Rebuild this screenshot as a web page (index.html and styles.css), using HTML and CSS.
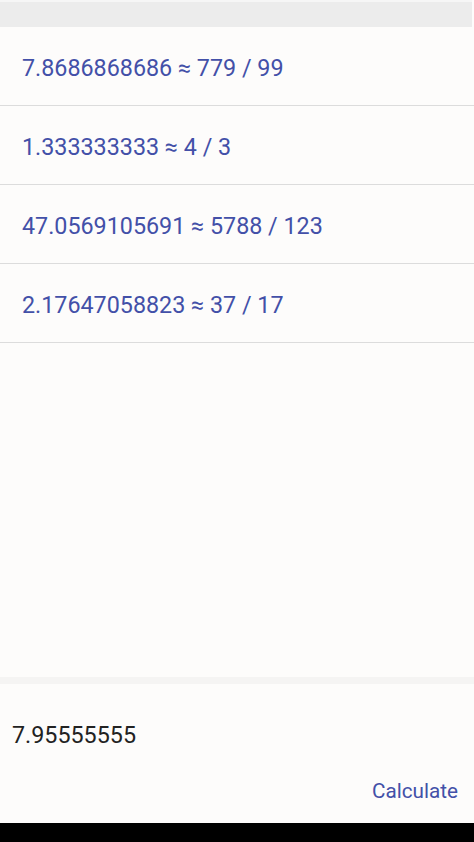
FILE: index.html
```html
<!DOCTYPE html>
<html>
<head>
<meta charset="utf-8">
<link rel="stylesheet" href="styles.css">
</head>
<body>
<div class="app">
  <div class="topbar"></div>
  <ul class="results">
    <li class="row">7.8686868686 ≈ 779 / 99</li>
    <li class="row">1.333333333 ≈ 4 / 3</li>
    <li class="row">47.0569105691 ≈ 5788 / 123</li>
    <li class="row">2.17647058823 ≈ 37 / 17</li>
  </ul>
  <div class="spacer"></div>
  <div class="panel">
    <div class="input">7.95555555</div>
    <div class="actions"><span class="btn">Calculate</span></div>
  </div>
  <div class="navbar"></div>
</div>
</body>
</html>
```
FILE: styles.css
```css
html, body {
  margin: 0;
  padding: 0;
  height: 100%;
}
body {
  background: #fdfcfb;
  font-family: Roboto, "Liberation Sans", sans-serif;
}
.app {
  display: flex;
  flex-direction: column;
  height: 842px;
}
.topbar {
  height: 25px;
  border-top: 2px solid #f6f6f6;
  background: #ececec;
  margin-right: 2px;
}
.results {
  list-style: none;
  margin: 0;
  padding: 0;
}
.row {
  height: 78px;
  box-sizing: border-box;
  padding-top: 3px;
  display: flex;
  align-items: center;
  padding-left: 22px;
  border-bottom: 1px solid #dcdcdc;
  color: #4350a8;
  font-size: 23.3px;
}
.row + .row {
  height: 79px;
}
.results .row:first-child {
  height: 79px;
}
.spacer {
  flex: 1;
}
.panel {
  border-top: 7px solid #f5f4f3;
  display: flex;
  flex-direction: column;
}
.input {
  height: 88px;
  display: flex;
  align-items: center;
  padding-left: 12px;
  padding-top: 14px;
  box-sizing: border-box;
  font-size: 23.3px;
  color: #222;
}
.actions {
  display: flex;
  justify-content: flex-end;
  padding-right: 16px;
  height: 51px;
  align-items: center;
}
.btn {
  color: #4350a8;
  font-size: 20.7px;
  margin-top: -14px;
}
.navbar {
  height: 19px;
  background: #000;
}
```
